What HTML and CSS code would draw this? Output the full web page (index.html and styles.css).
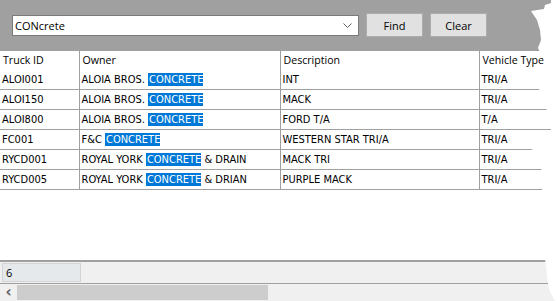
FILE: index.html
```html
<html>
<head>
	<title>Truck lookup</title>
	<meta name="viewport" content="width=device-width, initial-scale=1">
<link rel="stylesheet" href="styles.css">
</head>
<body>
<div class="window">
	<div class="toolbar">
		<div class="combo">
			<span class="combo-text">CONcrete</span>
			<svg class="chevron" width="9" height="6" viewBox="0 0 9 6"><path d="M0.5 0.5 L4.5 4.5 L8.5 0.5" fill="none" stroke="#606060" stroke-width="1"/></svg>
		</div>
		<button type="button" class="btn">Find</button>
		<button type="button" class="btn">Clear</button>
	</div>
	<table class="grid">
		<colgroup>
			<col class="c-id">
			<col class="c-owner">
			<col class="c-desc">
			<col class="c-type">
		</colgroup>
		<tr class="head">
			<td>Truck ID</td>
			<td>Owner</td>
			<td>Description</td>
			<td>Vehicle Type</td>
		</tr>
		<tr>
			<td>ALOI001</td>
			<td>ALOIA BROS. <span class="hit">CONCRETE</span></td>
			<td>INT</td>
			<td>TRI/A</td>
		</tr>
		<tr>
			<td>ALOI150</td>
			<td>ALOIA BROS. <span class="hit">CONCRETE</span></td>
			<td>MACK</td>
			<td>TRI/A</td>
		</tr>
		<tr>
			<td>ALOI800</td>
			<td>ALOIA BROS. <span class="hit">CONCRETE</span></td>
			<td>FORD T/A</td>
			<td>T/A</td>
		</tr>
		<tr>
			<td>FC001</td>
			<td>F&amp;C <span class="hit">CONCRETE</span></td>
			<td>WESTERN STAR TRI/A</td>
			<td>TRI/A</td>
		</tr>
		<tr>
			<td>RYCD001</td>
			<td>ROYAL YORK <span class="hit">CONCRETE</span> &amp; DRAIN</td>
			<td>MACK TRI</td>
			<td>TRI/A</td>
		</tr>
		<tr>
			<td>RYCD005</td>
			<td>ROYAL YORK <span class="hit">CONCRETE</span> &amp; DRIAN</td>
			<td>PURPLE MACK</td>
			<td>TRI/A</td>
		</tr>
	</table>
	<div class="spacer"></div>
	<div class="statusbar">
		<div class="count">6</div>
	</div>
	<div class="hscroll">
		<span class="arrow">&#8249;</span>
		<div class="thumb"></div>
	</div>
</div>
</body>
</html>
```

FILE: styles.css
```css
body {
	margin: 0;
	background: #ffffff;
	font-family: "DejaVu Sans Condensed", "DejaVu Sans", sans-serif;
	font-size: 11px;
	color: #000000;
}

/* torn right edge of the screenshot */
.window {
	width: 560px;
	height: 301px;
	display: flex;
	flex-direction: column;
	background: #ffffff;
	clip-path: polygon(0 0, 551px 0, 551px 3px, 545px 5px, 544px 9px, 531px 11px, 533px 14px, 537px 20px, 540px 30px, 541px 40px, 538px 48px,
		545px 62px, 538px 85px, 541px 96px, 546px 108px, 552px 124px, 549px 140px, 531px 150px, 537px 162px, 543px 172px, 542px 196px,
		548px 230px, 545px 259px, 546px 266px, 547px 276px, 548px 284px, 550px 292px, 555px 301px, 0 301px);
}

.toolbar {
	height: 50px;
	flex: none;
	background: #a0a0a0;
	display: flex;
	align-items: center;
	padding-left: 12px;
	box-sizing: border-box;
}

.combo {
	width: 347px;
	height: 21px;
	box-sizing: border-box;
	border: 1px solid #7a7a7a;
	background: #ffffff;
	display: flex;
	align-items: center;
	justify-content: space-between;
	padding: 0 6px 0 2px;
	font-family: "Open Sans", sans-serif;
	font-size: 11px;
}

.chevron {
	margin-top: 1px;
}

.btn {
	width: 57px;
	height: 24px;
	margin-left: 7px;
	background: #e1e1e1;
	border: 1px solid #adadad;
	font-family: "Open Sans", sans-serif;
	font-size: 11px;
	padding: 0;
	color: #000000;
}

.grid {
	width: 560px;
	border-collapse: collapse;
	table-layout: fixed;
	border-top: 1px solid #a0a0a0;
	flex: none;
}

.c-id { width: 79px; }
.c-owner { width: 201px; }
.c-desc { width: 199px; }
.c-type { width: 81px; }

.grid td {
	height: 20px;
	padding: 0 0 0 2px;
	white-space: nowrap;
	overflow: hidden;
	border-bottom: 1px solid #a0a0a0;
	border-left: 1px solid #a0a0a0;
	font-family: "DejaVu Sans Condensed", "DejaVu Sans", sans-serif;
	font-size: 11px;
}

.grid td:first-child {
	border-left: none;
}

.grid tr.head td {
	height: 19px;
	border-bottom: none;
	font-family: "Open Sans", sans-serif;
	font-size: 10.6px;
	padding-left: 3px;
}

.hit {
	display: inline-block;
	line-height: 13px;
	background: #0078d7;
	color: #ffffff;
	padding-left: 1px;
}

.spacer {
	flex: 1;
}

.statusbar {
	height: 21px;
	flex: none;
	background: #f0f0f0;
	border-top: 2px solid #a0a0a0;
	border-bottom: 1px solid #a0a0a0;
	display: flex;
	align-items: center;
	padding-left: 2px;
}

.count {
	width: 74px;
	height: 17px;
	line-height: 17px;
	background: #e6e9eb;
	border: 1px solid #d2d4d6;
	padding-left: 3px;
	font-family: "Open Sans", sans-serif;
	font-size: 11px;
}

.hscroll {
	height: 17px;
	flex: none;
	background: #f0f0f0;
	display: flex;
	align-items: center;
}

.arrow {
	width: 17px;
	text-align: center;
	font-family: "DejaVu Sans", sans-serif;
	font-size: 15px;
	font-weight: bold;
	color: #606060;
	line-height: 15px;
}

.thumb {
	width: 251px;
	height: 15px;
	background: #cdcdcd;
}
```
